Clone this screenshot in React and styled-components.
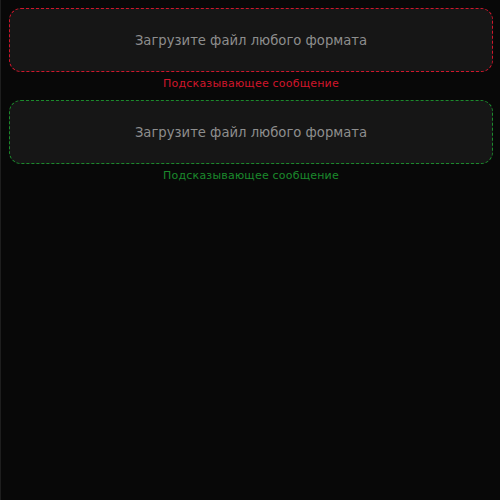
import React from 'react'
import styled, { createGlobalStyle } from 'styled-components'

const GlobalStyle = createGlobalStyle`
    html, body {
        margin: 0;
        padding: 0;
        background: #080808;
    }
`

const Page = styled.div`
    min-height: 100vh;
    box-sizing: border-box;
    border-left: 1px solid #1e1e1e;
    padding: 8px 7px 8px 8px;
    display: flex;
    flex-direction: column;
    gap: 9px;
    font-family: 'DejaVu Sans', sans-serif;
`

const Field = styled.div`
    display: flex;
    flex-direction: column;
    gap: 5px;
`

const DropZone = styled.div`
    height: 64px;
    box-sizing: border-box;
    border: 1px dashed ${p => p.$color};
    border-radius: 12px;
    background: #161616;
    display: flex;
    align-items: center;
    justify-content: center;
    color: #8e8e8e;
    font-size: 13.2px;
    cursor: pointer;
`

const Hint = styled.div`
    text-align: center;
    font-size: 11px;
    line-height: 14px;
    letter-spacing: 0.2px;
    color: ${p => p.$color};
`

const fields = [
    { color: '#d0162b' },
    { color: '#1b8a2c' },
]

const App = () => {
    return (
        <>
            <GlobalStyle />
            <Page>
                {fields.map((f, i) => (
                    <Field key={i}>
                        <DropZone $color={f.color}>Загрузите файл любого формата</DropZone>
                        <Hint $color={f.color}>Подсказывающее сообщение</Hint>
                    </Field>
                ))}
            </Page>
        </>
    )
}

export default App
